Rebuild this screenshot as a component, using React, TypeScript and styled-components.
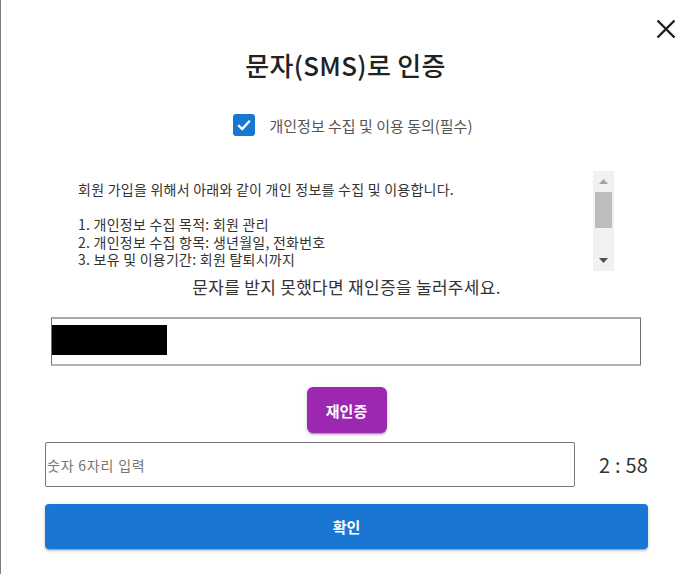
import React from "react";
import styled, { createGlobalStyle } from "styled-components";

const GlobalStyle = createGlobalStyle`
  html, body { margin: 0; padding: 0; background: #fff; }
  body { font-family: "Noto Sans CJK KR", "Noto Sans", sans-serif; }
  * { box-sizing: border-box; }
`;

const Dialog = styled.div`
  width: 690px;
  height: 574px;
  border-left: 1px solid #7d7d7d;
  background: #fff;
  display: flex;
  flex-direction: column;
  overflow: hidden;
`;

const TopBar = styled.div`
  display: flex;
  justify-content: flex-end;
  padding: 19px 14px 0 0;
`;

const CloseButton = styled.button`
  width: 20px;
  height: 20px;
  padding: 0;
  border: none;
  background: none;
  display: flex;
  cursor: pointer;
`;

const Title = styled.h2`
  margin: 8px 0 0;
  text-align: center;
  font-size: 26px;
  line-height: 36px;
  font-weight: 500;
  color: #222;
  letter-spacing: 0.3px;
`;

const Body = styled.div`
  display: flex;
  flex-direction: column;
  padding: 0 42px 0 44px;
`;

const ConsentRow = styled.label`
  margin-top: 31px;
  margin-left: 12px;
  display: flex;
  justify-content: center;
  align-items: center;
  gap: 15px;
  height: 22px;
`;

const CheckBox = styled.span`
  width: 22px;
  height: 22px;
  border-radius: 3px;
  background: #1976d2;
  display: flex;
  align-items: center;
  justify-content: center;
`;

const ConsentLabel = styled.span`
  font-size: 15px;
  color: #555;
`;

const ScrollArea = styled.div`
  margin-top: 35px;
  margin-left: 31px;
  width: 538px;
  height: 100px;
  display: flex;
`;

const TextPane = styled.div`
  flex: 1;
  overflow: hidden;
  padding: 10px 0 0 2px;
  font-size: 14px;
  line-height: 17.5px;
  letter-spacing: 0.25px;
  color: #333;
  white-space: pre-line;
`;

const ScrollBar = styled.div`
  width: 21px;
  background: #f1f1f1;
  display: flex;
  flex-direction: column;
`;

const ScrollArrow = styled.div`
  height: 21px;
  display: flex;
  align-items: center;
  justify-content: center;
`;

const ScrollThumb = styled.div`
  height: 36px;
  margin: 0 2px;
  background: #bdbdbd;
`;

const ScrollTrack = styled.div`
  flex: 1;
`;

const Message = styled.p`
  margin: 4px 0 0;
  text-align: center;
  font-size: 17px;
  line-height: 24px;
  letter-spacing: 0.3px;
  color: #333;
`;

const PhoneField = styled.div`
  margin-top: 18px;
  margin-left: 6px;
  width: 590px;
  height: 49px;
  border-style: solid;
  border-width: 2px 1px 2px 1px;
  border-color: #a8a8a8 #707070 #b3b3b3 #707070;
  padding-top: 6px;
`;

const Redaction = styled.div`
  width: 115px;
  height: 30px;
  background: #000;
`;

const ResendButton = styled.button`
  margin-top: 21px;
  align-self: center;
  width: 80px;
  height: 46px;
  border: none;
  border-radius: 6px;
  background: #9c27b0;
  color: #fff;
  font-family: inherit;
  font-size: 15px;
  font-weight: 700;
  box-shadow: 0 3px 1px -2px rgba(0, 0, 0, 0.2), 0 2px 2px 0 rgba(0, 0, 0, 0.14),
    0 1px 5px 0 rgba(0, 0, 0, 0.12);
  cursor: pointer;
`;

const CodeRow = styled.div`
  margin-top: 9px;
  display: flex;
  align-items: center;
  justify-content: space-between;
`;

const CodeInput = styled.input`
  width: 530px;
  height: 45px;
  border: 1px solid #767676;
  border-radius: 2px;
  padding: 0 1px;
  font-family: inherit;
  font-size: 14px;
  letter-spacing: 0.8px;
  color: #222;
  outline: none;
  &::placeholder {
    color: #757575;
  }
`;

const Timer = styled.span`
  font-size: 20px;
  color: #333;
  letter-spacing: 0.2px;
`;

const ConfirmButton = styled.button`
  margin-top: 17px;
  width: 100%;
  height: 45px;
  border: none;
  border-radius: 4px;
  background: #1976d2;
  color: #fff;
  font-family: inherit;
  font-size: 15px;
  font-weight: 700;
  box-shadow: 0 3px 1px -2px rgba(0, 0, 0, 0.2), 0 2px 2px 0 rgba(0, 0, 0, 0.14),
    0 1px 5px 0 rgba(0, 0, 0, 0.12);
  cursor: pointer;
`;

const privacyLines = [
  "회원 가입을 위해서 아래와 같이 개인 정보를 수집 및 이용합니다.",
  "",
  "1. 개인정보 수집 목적: 회원 관리",
  "2. 개인정보 수집 항목: 생년월일, 전화번호",
  "3. 보유 및 이용기간: 회원 탈퇴시까지",
];

export default function App() {
  return (
    <>
      <GlobalStyle />
      <Dialog>
        <TopBar>
          <CloseButton aria-label="닫기">
            <svg width="20" height="20" viewBox="0 0 20 20">
              <path d="M1.5 1.5 L18.5 18.5 M18.5 1.5 L1.5 18.5" stroke="#1e1e1e" strokeWidth="2.4" fill="none" />
            </svg>
          </CloseButton>
        </TopBar>
        <Title>문자(SMS)로 인증</Title>
        <Body>
          <ConsentRow>
            <CheckBox>
              <svg width="18" height="18" viewBox="0 0 18 18">
                <path d="M3.2 9.2 L7.2 13 L14.8 4.8" stroke="#fff" strokeWidth="2.4" fill="none" />
              </svg>
            </CheckBox>
            <ConsentLabel>개인정보 수집 및 이용 동의(필수)</ConsentLabel>
          </ConsentRow>
          <ScrollArea>
            <TextPane>{privacyLines.join("\n")}</TextPane>
            <ScrollBar>
              <ScrollArrow>
                <svg width="9" height="5" viewBox="0 0 9 5">
                  <polygon points="0,5 4.5,0 9,5" fill="#a3a3a3" />
                </svg>
              </ScrollArrow>
              <ScrollThumb />
              <ScrollTrack />
              <ScrollArrow>
                <svg width="9" height="5" viewBox="0 0 9 5">
                  <polygon points="0,0 9,0 4.5,5" fill="#505050" />
                </svg>
              </ScrollArrow>
            </ScrollBar>
          </ScrollArea>
          <Message>문자를 받지 못했다면 재인증을 눌러주세요.</Message>
          <PhoneField>
            <Redaction />
          </PhoneField>
          <ResendButton>재인증</ResendButton>
          <CodeRow>
            <CodeInput placeholder="숫자 6자리 입력" />
            <Timer>2 : 58</Timer>
          </CodeRow>
          <ConfirmButton>확인</ConfirmButton>
        </Body>
      </Dialog>
    </>
  );
}
